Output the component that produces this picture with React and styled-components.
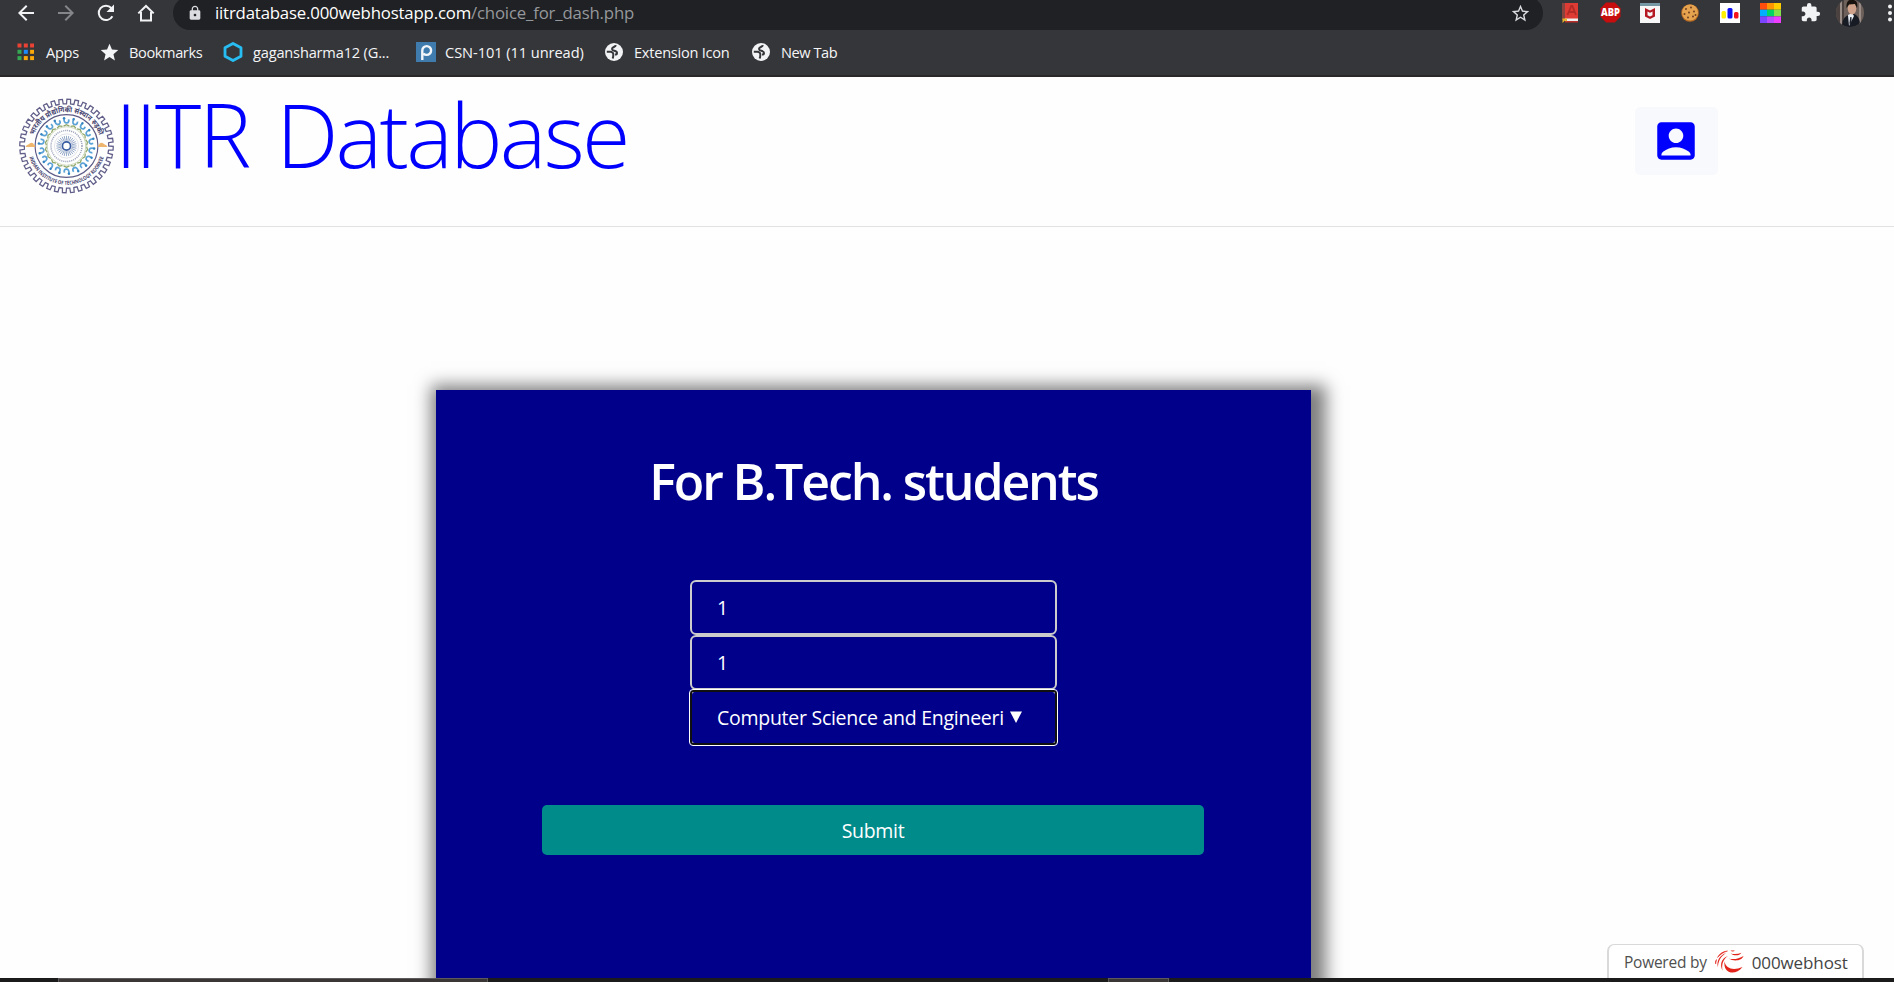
import React from "react";
import styled, { createGlobalStyle } from "styled-components";
import { MdAccountBox, MdExtension, MdLock, MdArrowBack, MdArrowForward, MdStar, MdStarBorder } from "react-icons/md";

const Global = createGlobalStyle`
  * { box-sizing: border-box; }
  html, body { margin: 0; height: 100%; overflow: hidden; background: #fefefe; }
  body { font-family: "Open Sans", "Noto Sans", sans-serif; }
`;

const Screen = styled.div`
  width: 1894px;
  height: 982px;
  display: flex;
  flex-direction: column;
  overflow: hidden;
`;

/* Browser chrome */
const Chrome = styled.div`
  height: 77px;
  flex: none;
  background: #35363a;
  border-bottom: 2px solid #292727;
  overflow: hidden;
`;
const Toolbar = styled.div`
  height: 34px;
  margin-top: -4px;
  display: flex;
  align-items: center;
  padding-left: 13px;
`;
const NavButton = styled.div`
  width: 40px;
  height: 26px;
  flex: none;
  display: grid;
  place-items: center;
  padding-right: 15px;
  color: ${(p) => (p.$dim ? "#85868a" : "#f1f3f4")};
`;
const AddressBar = styled.div`
  width: 1370px;
  height: 34px;
  flex: none;
  border-radius: 17px;
  background: #202124;
  display: flex;
  align-items: center;
  padding: 0 12px 0 14px;
  color: #dadce0;
`;
const Url = styled.div`
  flex: 1;
  margin: -1px 0 0 12px;
  font-size: 16.8px;
  letter-spacing: -0.18px;
  line-height: 24px;
  color: #fff;
  white-space: nowrap;
`;
const UrlPath = styled.span`
  color: #95989c;
`;
const Extensions = styled.div`
  display: flex;
  align-items: center;
  flex: none;
  margin-left: 7px;
`;
const Extension = styled.div`
  width: 40px;
  height: 30px;
  flex: none;
  display: grid;
  place-items: center;
  padding-bottom: 1px;
  color: #f1f3f4;
`;
const Bookmarks = styled.div`
  height: 45px;
  display: flex;
  align-items: center;
  padding: 0 0 1px 16px;
`;
const Bookmark = styled.div`
  width: ${(p) => p.$w}px;
  flex: none;
  display: flex;
  align-items: center;
  gap: ${(p) => p.$gap || 9}px;
  color: #f4f5f6;
  font-size: 14.6px;
  letter-spacing: ${(p) => p.$ls || -0.3}px;
  line-height: 20px;
  white-space: nowrap;
  svg { flex: none; }
`;

/* Page */
const Page = styled.main`
  flex: 1;
  min-height: 0;
  display: flex;
  flex-direction: column;
  background: #fefefe;
`;
const Content = styled.div`
  flex: 1;
  min-height: 0;
  overflow: hidden;
`;
const Header = styled.header`
  height: 150px;
  flex: none;
  border-bottom: 1px solid #e2e2e3;
  display: flex;
  align-items: flex-start;
  padding-left: 18px;
`;
const Title = styled.h1`
  flex: 1;
  margin: 0;
  font-size: 88px;
  line-height: 114px;
  font-weight: 300;
  letter-spacing: -2.7px;
  word-spacing: 7px;
  color: #00f;
  white-space: nowrap;
`;
const TitlePrefix = styled.span`
  letter-spacing: -2.2px;
`;
const Emblem = styled.div`
  width: 97px;
  height: 98px;
  margin-top: 20px;
`;
const AccountButton = styled.button`
  width: 83px;
  height: 68px;
  margin: 30px 176px 0 0;
  border: 0;
  border-radius: 5px;
  background: #f8f9fc;
  color: #00f;
  display: grid;
  place-items: center;
  padding: 0 1px 0 0;
`;
const Card = styled.section`
  width: 875px;
  height: 700px;
  margin: 163px 0 0 436px;
  background: #00008b;
  box-shadow: 5px 5px 16px 10px rgba(0, 0, 0, 0.5);
  color: #fff;
  display: flex;
  flex-direction: column;
  align-items: center;
`;
const Heading = styled.h2`
  margin: 56px 0 0;
  font-size: 50px;
  line-height: 70px;
  font-weight: 600;
  letter-spacing: -2.1px;
  white-space: nowrap;
`;
const Fields = styled.div`
  margin-top: 64px;
  width: 367px;
`;
const Field = styled.div`
  height: 55px;
  border: 2px solid #ccc;
  border-radius: 6px;
  display: flex;
  align-items: center;
  padding: 0 0 0 25px;
  font-size: 19.5px;
  letter-spacing: -0.27px;
  line-height: 28px;
  white-space: nowrap;
`;
const FocusedField = styled(Field)`
  border-color: #101010;
  border-radius: 3px;
  outline: 1px solid #fff;
  background:
    radial-gradient(circle at 100% 100%, transparent 2.5px, #aaa 3.5px) 0 0 / 3px 3px no-repeat,
    radial-gradient(circle at 0 100%, transparent 2.5px, #aaa 3.5px) 100% 0 / 3px 3px no-repeat,
    radial-gradient(circle at 100% 0, transparent 2.5px, #aaa 3.5px) 0 100% / 3px 3px no-repeat,
    radial-gradient(circle at 0 0, transparent 2.5px, #aaa 3.5px) 100% 100% / 3px 3px no-repeat;
`;
const Arrow = styled.svg`
  margin: -2px 0 0 6px;
`;
const Submit = styled.button`
  width: 662px;
  height: 50px;
  margin: 60px 1px 0 0;
  padding: 1px 0 0;
  border: 0;
  border-radius: 5px;
  background: #008b8b;
  color: #fff;
  font: 400 19.5px "Open Sans", sans-serif;
  letter-spacing: -0.3px;
`;
const HostBadge = styled.div`
  position: absolute;
  left: 1607px;
  top: 944px;
  width: 257px;
  height: 34px;
  border: 1px solid #d9d9d9;
  border-width: 1px 2px 0;
  border-radius: 7px 7px 0 0;
  background: #fff;
  display: flex;
  align-items: center;
  gap: 8px;
  padding: 1px 0 0 15px;
  font-size: 15.5px;
  letter-spacing: -0.25px;
  color: #505050;
  white-space: nowrap;
`;
const HostName = styled.span`
  font-size: 17px;
  letter-spacing: -0.1px;
  color: #444;
`;
const Taskbar = styled.div`
  height: 4px;
  flex: none;
  background: #1b1b1b;
  display: flex;
`;
const TaskItem = styled.div`
  width: ${(p) => p.$w}px;
  margin-left: ${(p) => p.$gap}px;
  background: #393635;
  border: 1px solid #5c5a5a;
  border-bottom: 0;
`;

const polar = (r, deg) => {
  const a = (deg * Math.PI) / 180;
  return `${(50 + r * Math.cos(a)).toFixed(2)} ${(50 + r * Math.sin(a)).toFixed(2)}`;
};
const TEETH = 36;
const gear = Array.from({ length: TEETH }, (_, i) => {
  const s = 360 / TEETH;
  const a = i * s;
  return `${i ? "L" : "M"}${polar(43.5, a)} L${polar(48.2, a + s * 0.05)} L${polar(48.2, a + s * 0.5)} L${polar(43.5, a + s * 0.55)}`;
}).join(" ") + "Z";
const ring = (n) => Array.from({ length: n }, (_, i) => (i * 360) / n);

function Seal() {
  return (
    <svg width="97" height="98" viewBox="0 0 100 100" fill="none">
      <defs>
        <path id="sealTop" d="M14.5 50.5A35.5 35.5 0 0 1 85.5 50.5" />
        <path id="sealBottom" d="M10 50A40 40 0 0 0 90 50" />
      </defs>
      <path d={gear} stroke="#615f8a" strokeWidth="1.3" />
      <circle cx="50" cy="50" r="32.4" stroke="#5d5b86" strokeWidth="1.2" />
      <text fontSize="7.6" fontWeight="700" fill="#45436f" fontFamily="Noto Sans, sans-serif" textAnchor="middle">
        <textPath href="#sealTop" startOffset="50%" textLength="88" lengthAdjust="spacingAndGlyphs">भारतीय प्रौद्योगिकी संस्थान रुड़की</textPath>
      </text>
      <text fontSize="5.6" fontWeight="700" fill="#45436f" textAnchor="middle">
        <textPath href="#sealBottom" startOffset="50%" textLength="102" lengthAdjust="spacingAndGlyphs">INDIAN INSTITUTE OF TECHNOLOGY ROORKEE</textPath>
      </text>
      <path d="M8 50.5c1-2 3-1.500 4-3 2-1.500 4-.5 4.500 1.500h1v2H8zM92 50.500c-1-2-3-1.500-4-3-2-1.500-4-.5-4.500 1.500h-1v2H92z" fill="#eeb66c" />
      {ring(18).map((a) => (
        <g key={a} transform={`rotate(${a} 50 50)`}>
          <path d="M47.5 22c-.3 3 1 4.500 3 4.200 1.800-.3 2.300-2 1.500-3.700" stroke="#5ba2d6" strokeWidth="1.8" />
          <circle cx="47.5" cy="21.5" r="1.3" fill="#3484c1" />
          <path d="M47 29.5l3-1.500 3 1.500" stroke="#8fa768" strokeWidth="1.3" />
        </g>
      ))}
      <circle cx="50" cy="50" r="19.8" stroke="#b5c59c" strokeWidth=".7" />
      <circle cx="50" cy="50" r="16" stroke="#9aa2b9" strokeWidth="1.5" strokeDasharray="1.1 1" />
      <circle cx="50" cy="50" r="12.5" stroke="#c4cad6" strokeWidth=".5" />
      {ring(28).map((a) => (
        <path key={a} d="M50 44.5V39.5" stroke="#6f89b4" strokeWidth=".7" transform={`rotate(${a} 50 50)`} />
      ))}
      <circle cx="50" cy="50" r="4.2" stroke="#3a5da0" strokeWidth="1.8" />
    </svg>
  );
}

const Reload = () => (
  <svg width="20" height="20" viewBox="0 0 20 20" fill="none">
    <path d="M16.4 13.2A7.2 7.2 0 1 1 15.3 5L17 7" stroke="currentColor" strokeWidth="2" />
    <path d="M18 1.5V9h-7.5z" fill="currentColor" />
  </svg>
);
const Home = () => (
  <svg width="18" height="18" viewBox="0 0 18 18" fill="none" stroke="currentColor" strokeWidth="2">
    <path d="M1.3 9.4L9 2l7.7 7.4M4 8v8.5h10V8" />
  </svg>
);
const AppsGrid = () => (
  <svg width="18" height="18" viewBox="0 0 18 18">
    {["#ea4335", "#ea4335", "#ea4335", "#34a853", "#1a8cff", "#fba90a", "#34a853", "#fba90a", "#fba90a"].map((c, i) => (
      <rect key={i} x={1.5 + (i % 3) * 6.3} y={0.5 + Math.floor(i / 3) * 6.3} width="4" height="4" fill={c} />
    ))}
  </svg>
);
const Hexagon = () => (
  <svg width="20" height="20" viewBox="0 0 20 20" fill="none">
    <path d="M10 1.5l8 4.3v8.4L10 18.5l-8-4.3V5.8z" stroke="#27bdf3" strokeWidth="2.8" strokeLinejoin="round" />
  </svg>
);
const Piazza = () => (
  <svg width="20" height="20" viewBox="0 0 20 20" fill="none">
    <rect width="20" height="20" fill="#3f7cad" />
    <path d="M6.3 18V8.5a4.4 4.4 0 1 1 4.4 4.4c-1.6 0-2.5-.5-3.3-1.3" stroke="#f2f6fa" strokeWidth="2.4" />
  </svg>
);
const Globe = () => (
  <svg width="18" height="18" viewBox="0 0 18 18" fill="none">
    <circle cx="9" cy="9" r="9" fill="#f1f3f4" />
    <path d="M10.8 2.2C10.500 4.300 7 3.700 7 6c0 2.500 5 1 5 4 0 1.200-.8 1.600-2 1.600" stroke="#35363a" strokeWidth="2" />
    <path d="M1.800 8.800h3.700c2 .2 3 1.200 2.800 2.700-.1 1.500.2 2.500-.8 4" stroke="#35363a" strokeWidth="2" />
  </svg>
);
const Dictionary = () => (
  <svg width="18" height="20" viewBox="0 0 18 20">
    <rect x="1" y="0" width="16" height="16" fill="#dd3b33" />
    <rect x="1" y="0" width="3" height="17" fill="#87443f" />
    <path d="M4 15.5h13V19H4z" fill="#eee" />
    <path d="M4 18h13v1.5H4z" fill="#b92e28" />
    <path d="M6.5 12l3.8-9h1l3.7 9M8 9h5.5" stroke="#b32b26" strokeWidth="1.8" fill="none" />
    <path d="M1.5 15.5h4.5v3L4 17.6 1.5 20z" fill="#e7b428" />
  </svg>
);
const AdBlock = () => (
  <svg width="21" height="21" viewBox="0 0 21 21">
    <path d="M6.2.5h8.6l5.7 5.7v8.6l-5.7 5.7H6.2L.5 14.8V6.2z" fill="#c70d0d" />
    <text x="10.5" y="14.4" fontSize="10.5" fontWeight="800" textAnchor="middle" fill="#fff" textLength="19" lengthAdjust="spacingAndGlyphs">ABP</text>
  </svg>
);
const Shield = () => (
  <svg width="20" height="20" viewBox="0 0 20 20">
    <rect width="20" height="20" fill="#f7f7f7" />
    <rect width="20" height="3" fill="#7799a5" />
    <path d="M5 5l5 2.5L15 5v8.500L10 16l-5-2.5z" fill="#b41822" />
    <path d="M7.5 8.5L10 9.8l2.5-1.3v3.7L10 13.4l-2.5-1.2z" fill="#f7f7f7" />
  </svg>
);
const Cookie = () => (
  <svg width="18" height="18" viewBox="0 0 18 18">
    <circle cx="9" cy="9" r="8.8" fill="#b96b20" />
    <circle cx="9" cy="8.5" r="8" fill="#e5a350" />
    {[[5, 5], [10, 3.5], [13, 7.5], [8, 8.5], [3.5, 10], [7, 13.5], [12, 12.5], [14.5, 11]].map(([x, y]) => (
      <circle key={`${x}-${y}`} cx={x} cy={y} r="1" fill="#70401f" />
    ))}
  </svg>
);
const Chart = () => (
  <svg width="20" height="20" viewBox="0 0 20 20">
    <rect width="20" height="20" fill="#fff" />
    <rect x="1.5" y="8" width="4.5" height="7.5" rx="1.5" fill="#ffef00" />
    <rect x="7.5" y="5" width="5" height="10.5" rx="1.5" fill="#1010f5" />
    <rect x="14" y="9" width="4.5" height="6.5" rx="1.5" fill="#f5141e" />
  </svg>
);
const Palette = () => (
  <svg width="21" height="20" viewBox="0 0 21 20">
    {["#ff4d0d", "#ff9500", "#ffcc00", "#00aeff", "#00d465", "#83e14a", "#7b45ff", "#b84aff", "#ed3dff"].map((c, i) => (
      <rect key={i} x={(i % 3) * 7} y={Math.floor(i / 3) * 6.7} width="7" height="6.7" fill={c} />
    ))}
  </svg>
);
const Avatar = () => (
  <svg width="28" height="28" viewBox="0 0 28 28">
    <defs>
      <clipPath id="avatarClip"><circle cx="14" cy="14" r="14" /></clipPath>
    </defs>
    <g clipPath="url(#avatarClip)">
      <rect width="28" height="28" fill="#6e605a" />
      <path d="M0 0h8v28H0z" fill="#4b423f" />
      <path d="M4 0h2v28H4zM23 0h2v28h-2z" fill="#9a8d87" />
      <path d="M6 28c0-8 3-11 7-12l5-1c5 2 6 6 6 13z" fill="#171b24" />
      <path d="M12 16l1 11 5-10-2-3z" fill="#e9eef5" />
      <ellipse cx="16" cy="9.5" rx="4.3" ry="6" fill="#cfa28b" />
      <path d="M10.5 9C10 2 13 0 17 1c4 0 5 4 4 8l-2-4-6 .5z" fill="#19130f" />
      <path d="M14.3 18h1.200v5l-1.300 4-.8-3z" fill="#20242d" />
    </g>
  </svg>
);
const MoreDots = () => (
  <svg width="4" height="18" viewBox="0 0 4 18" fill="#f1f3f4">
    <circle cx="2" cy="2.5" r="2" /><circle cx="2" cy="9" r="2" /><circle cx="2" cy="15.5" r="2" />
  </svg>
);
const HostLogo = () => (
  <svg width="29" height="25" viewBox="0 0 29 25" fill="#e2231a">
    <path d="M28.5 6c-1.5 4.5-9 6-15 2.500C18 9.800 24 9 28.500 6z" />
    <path d="M26.5 2.8c-2 3-7 3.500-11 .7 4 1 7.500.8 11-.7zM20 .5c-1.500 1.300-3.200 1.300-4.500 0z" />
    <path d="M9.5 11.5c1.5 7 8.500 9.500 18 5.500-7 9-19.500 7-18-5.500z" />
    <path d="M13 6C6.5 8 4.5 14.5 7.5 20.5 6.5 14 8 9.5 13 6z" />
    <path d="M11 3C4.5 5.5 1.200 11 3 17.500 3 11.500 5.500 6.500 11 3z" />
    <path d="M12.5 1C8.5 1.200 4.500 3.500 2.500 7.500 5.500 4 8.500 2.300 12.500 1zM1.500 9.500C.3 11 .2 12.500.7 14z" stroke="#e2231a" strokeWidth=".5" />
  </svg>
);

export default function App() {
  return (
    <>
      <Global />
      <Screen>
        <Chrome>
          <Toolbar>
            <NavButton><MdArrowBack size={24} /></NavButton>
            <NavButton $dim><MdArrowForward size={24} /></NavButton>
            <NavButton><Reload /></NavButton>
            <NavButton><Home /></NavButton>
            <AddressBar>
              <MdLock size={16} />
              <Url>iitrdatabase.000webhostapp.com<UrlPath>/choice_for_dash.php</UrlPath></Url>
              <MdStarBorder size={21} />
            </AddressBar>
            <Extensions>
              <Extension><Dictionary /></Extension>
              <Extension><AdBlock /></Extension>
              <Extension><Shield /></Extension>
              <Extension><Cookie /></Extension>
              <Extension><Chart /></Extension>
              <Extension><Palette /></Extension>
              <Extension><MdExtension size={21} /></Extension>
              <Extension><Avatar /></Extension>
              <Extension><MoreDots /></Extension>
            </Extensions>
          </Toolbar>
          <Bookmarks>
            <Bookmark $w={83} $gap={12}><AppsGrid />Apps</Bookmark>
            <Bookmark $w={124} $gap={9} $ls={-0.4}><MdStar size={21} />Bookmarks</Bookmark>
            <Bookmark $w={193} $gap={10} $ls={-0.18}><Hexagon />gagansharma12 (G...</Bookmark>
            <Bookmark $w={189} $gap={9} $ls={-0.06}><Piazza />CSN-101 (11 unread)</Bookmark>
            <Bookmark $w={147} $gap={11} $ls={-0.25}><Globe />Extension Icon</Bookmark>
            <Bookmark $w={90} $gap={11} $ls={-0.45}><Globe />New Tab</Bookmark>
          </Bookmarks>
        </Chrome>
        <Page>
          <Header>
            <Emblem><Seal /></Emblem>
            <Title><TitlePrefix>IITR</TitlePrefix> Database</Title>
            <AccountButton aria-label="Account"><MdAccountBox size={50} /></AccountButton>
          </Header>
          <Content>
            <Card>
              <Heading>For B.Tech. students</Heading>
              <Fields>
                <Field>1</Field>
                <Field>1</Field>
                <FocusedField>
                  Computer Science and Engineeri
                  <Arrow width="12" height="12" viewBox="0 0 12 12" fill="#fff"><path d="M0 .5h12L6 12z" /></Arrow>
                </FocusedField>
              </Fields>
              <Submit>Submit</Submit>
            </Card>
          </Content>
        </Page>
        <Taskbar>
          <TaskItem $gap={58} $w={430} />
          <TaskItem $gap={620} $w={61} />
        </Taskbar>
        <HostBadge>
          Powered by
          <HostLogo />
          <HostName>000webhost</HostName>
        </HostBadge>
      </Screen>
    </>
  );
}
